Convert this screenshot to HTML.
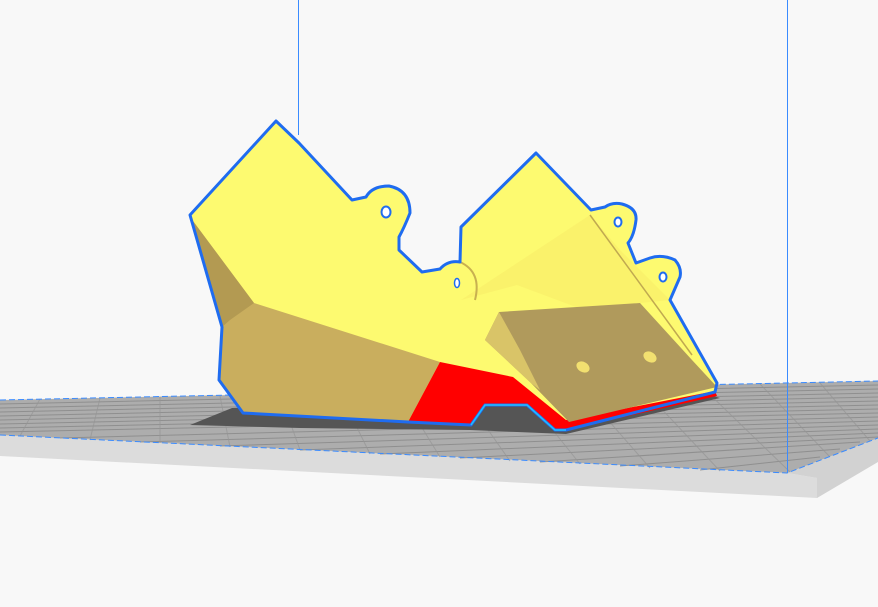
<!DOCTYPE html>
<html><head><meta charset="utf-8"><style>html,body{margin:0;padding:0;background:#f8f8f8;}svg{display:block}</style></head>
<body>
<svg width="878" height="607" viewBox="0 0 878 607" xmlns="http://www.w3.org/2000/svg">
<rect width="878" height="607" fill="#f8f8f8"/>
<polygon points="0,433 787,473 817,478 817,498 0,456" fill="#dcdcdc"/>
<polygon points="787,473 878,438 878,462 817,498 817,478" fill="#d2d2d2"/>
<polygon points="0,400 878,381 878,438 787,473 0,435" fill="#adadad"/>
<g stroke="#8a8a8a" stroke-width="1" opacity="0.85">
<line x1="0" y1="404" x2="878" y2="385"/><line x1="0" y1="408" x2="878" y2="389"/>
<line x1="0" y1="412" x2="878" y2="393"/><line x1="0" y1="416" x2="878" y2="397"/>
<line x1="0" y1="420" x2="878" y2="401"/><line x1="0" y1="424" x2="878" y2="405"/>
<line x1="0" y1="428" x2="878" y2="409"/><line x1="0" y1="432" x2="878" y2="413"/>
<line x1="60" y1="438" x2="878" y2="417"/><line x1="140" y1="442" x2="878" y2="421"/>
<line x1="220" y1="446" x2="878" y2="425"/><line x1="300" y1="450" x2="878" y2="429"/>
<line x1="380" y1="454" x2="878" y2="433"/><line x1="460" y1="458" x2="878" y2="437"/>
<line x1="540" y1="462" x2="860" y2="442"/><line x1="620" y1="466" x2="840" y2="449"/>
<line x1="700" y1="470" x2="820" y2="457"/>
</g>
<g stroke="#959595" stroke-width="1" opacity="0.7">
<line x1="40" y1="399" x2="20" y2="436"/><line x1="100" y1="398" x2="90" y2="440"/>
<line x1="160" y1="397" x2="160" y2="443"/><line x1="220" y1="396" x2="230" y2="447"/>
<line x1="280" y1="394" x2="300" y2="450"/><line x1="340" y1="393" x2="370" y2="454"/>
<line x1="400" y1="392" x2="440" y2="457"/><line x1="460" y1="390" x2="510" y2="461"/>
<line x1="520" y1="389" x2="580" y2="464"/><line x1="580" y1="388" x2="650" y2="468"/>
<line x1="640" y1="386" x2="720" y2="471"/><line x1="700" y1="385" x2="790" y2="472"/>
<line x1="760" y1="384" x2="830" y2="457"/><line x1="820" y1="383" x2="870" y2="441"/>
</g>
<polyline points="0,400 878,381" stroke="#3a8bff" stroke-width="1" fill="none" stroke-dasharray="6 3"/>
<polyline points="0,435 787,473 878,438" stroke="#3a8bff" stroke-width="1" fill="none" stroke-dasharray="6 3"/>
<polygon points="190,425 232,408 700,392 720,398 566,434 470,430 300,428" fill="#555"/>
<line x1="298.5" y1="0" x2="298.5" y2="135" stroke="#3a8bff" stroke-width="1"/>
<line x1="787.5" y1="0" x2="787.5" y2="473" stroke="#3a8bff" stroke-width="1"/>
<path id="o" d="M190,215 L276,121 L299,143 L352,200 L366,197 Q372,186 389,186 Q410,190 410,213 Q404,228 399,237 L399,250 L422,272 L440,269 Q448,260 460,262 L461,227 L536,153 L591,210 L605,207 Q612,202 622,204 Q637,208 636,220 Q634,236 628,243 L636,263 L650,258 Q662,254 675,260 Q682,268 680,277 L670,300 L717,383 L715,392 L566,430 L555,430 L527,405 L485,405 L471,425 L408,422 L243,413 L219,380 L222,327 Z" fill="#fdfa70"/>
<polygon points="461,300 517,285 576,307 640,303 670,300 620,250 590,215" fill="#f8ec68" opacity="0.6"/>
<polygon points="190,217 254,303 440,362 408,422 243,413 219,380 222,327" fill="#c9ae5e"/>
<polygon points="190,217 254,303 230,320 222,327" fill="#b39a52"/>
<polygon points="440,362 513,377 566,420 715,391 717,396 566,430 555,430 527,405 485,405 471,425 408,422" fill="#ff0000"/>
<polygon points="499,312 640,303 692,360 717,387 569,422 531,383 485,340" fill="#b09a5c"/>
<polygon points="485,340 499,312 520,350 540,390 531,383" fill="#d9c468"/>
<ellipse cx="583" cy="367" rx="7" ry="5" fill="#f2e070" transform="rotate(30 583 367)"/>
<ellipse cx="650" cy="357" rx="7" ry="5" fill="#f2e070" transform="rotate(30 650 357)"/>
<line x1="590" y1="215" x2="692" y2="355" stroke="#c0a950" stroke-width="1.5"/>
<path d="M460,262 Q482,272 475,300" stroke="#c8b050" stroke-width="2" fill="none"/>
<path d="M190,215 L276,121 L299,143 L352,200 L366,197 Q372,186 389,186 Q410,190 410,213 Q404,228 399,237 L399,250 L422,272 L440,269 Q448,260 460,262 L461,227 L536,153 L591,210 L605,207 Q612,202 622,204 Q637,208 636,220 Q634,236 628,243 L636,263 L650,258 Q662,254 675,260 Q682,268 680,277 L670,300 L717,383 L715,392 L566,430 L555,430 L527,405 L485,405 L471,425 L408,422 L243,413 L219,380 L222,327 Z" fill="none" stroke="#1f6cf0" stroke-width="3" stroke-linejoin="round"/>
<polyline points="566,430 555,430 527,405 485,405 471,425" fill="none" stroke="#22c0ff" stroke-width="1.5"/>
<ellipse cx="386" cy="212" rx="4.5" ry="5.5" fill="#fff" stroke="#1f6cf0" stroke-width="2"/>
<ellipse cx="618" cy="222" rx="3.5" ry="4.5" fill="#fff" stroke="#1f6cf0" stroke-width="2"/>
<ellipse cx="663" cy="277" rx="3.5" ry="4.5" fill="#fff" stroke="#1f6cf0" stroke-width="2"/>
<ellipse cx="457" cy="283" rx="2.5" ry="4.5" fill="#fff" stroke="#1f6cf0" stroke-width="1.5"/>
</svg>
</body></html>
